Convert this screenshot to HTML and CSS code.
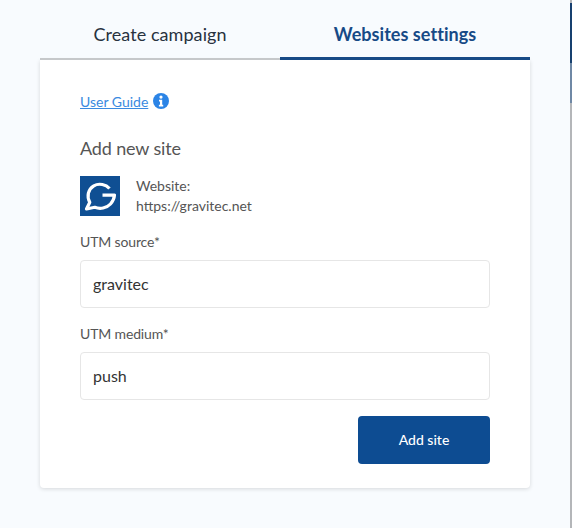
FILE: index.html
```html
<!DOCTYPE html>
<html lang="en">
<head>
<meta charset="utf-8">
<title>Websites settings</title>
<link rel="stylesheet" href="styles.css">
</head>
<body>
<div class="page">
  <div class="tabs">
    <div class="tab">Create campaign</div>
    <div class="tab tab-active">Websites settings</div>
  </div>
  <main class="card">
    <div class="guide">
      <a class="guide-link" href="#">User Guide</a>
      <svg class="info" viewBox="0 0 16 16" width="16" height="16" aria-hidden="true">
        <circle cx="8" cy="8" r="8" fill="#2b84e6"/>
        <circle cx="8" cy="4.1" r="1.6" fill="#fff"/>
        <path d="M6 6.8h3.2v5h1v1.6H5.9v-1.6h1.1V8.4H6z" fill="#fff"/>
      </svg>
    </div>
    <h2 class="title">Add new site</h2>
    <div class="site">
      <svg class="logo" viewBox="0 0 40 40" width="40" height="40" aria-hidden="true">
        <rect width="40" height="40" fill="#0f4f93"/>
        <path d="M29.5 12.5C26 8.5 19 6.8 13.8 9.8C8 13.2 6.5 20.5 9.8 26.2L6.5 33L14.8 31.3C20 33.3 26.5 32.3 30.5 28C33 25.3 34.2 22.5 34.5 19.2H22.5" fill="none" stroke="#fff" stroke-width="3.2" stroke-linejoin="round"/>
      </svg>
      <div class="site-text">
        <div>Website:</div>
        <div>https://gravitec.net</div>
      </div>
    </div>
    <label class="label" for="src">UTM source*</label>
    <input class="input" id="src" value="gravitec">
    <label class="label label-next" for="med">UTM medium*</label>
    <input class="input" id="med" value="push">
    <div class="actions">
      <button class="btn" type="button">Add site</button>
    </div>
  </main>
</div>
<div class="edge"><div class="edge-thumb"></div></div>
</body>
</html>
```
FILE: styles.css
```css
* { box-sizing: border-box; }
html, body { margin: 0; height: 100%; }
body {
  background: #f8fbfe;
  font-family: Lato, "Liberation Sans", sans-serif;
  color: #555;
  overflow: hidden;
}
.page { width: 490px; margin-left: 40px; }
.tabs { display: flex; height: 60px; }
.tab {
  flex: 0 0 240px;
  display: flex;
  align-items: center;
  justify-content: center;
  height: 60px;
  padding-top: 9px;
  font-size: 18px;
  letter-spacing: 0.07px;
  color: #28323f;
  border-bottom: 2px solid #c6c8ca;
}
.tab-active {
  flex: 0 0 250px;
  padding-top: 10px;
  color: #174a86;
  font-weight: 700;
  letter-spacing: 0.05px;
  border-bottom: 3px solid #174a86;
}
.card {
  background: #fff;
  height: 428px;
  padding: 31px 40px 0;
  border-radius: 0 0 4px 4px;
  box-shadow: 0 1px 4px rgba(0, 0, 0, 0.14);
}
.guide { display: flex; align-items: center; gap: 5px; height: 20px; }
.guide-link { color: #3a8ae0; font-size: 14px; }
.title { margin: 26px 0 0; font-size: 18px; line-height: 22px; font-weight: 400; letter-spacing: -0.15px; color: #555; }
.site { display: flex; align-items: center; gap: 16px; margin-top: 17px; }
.logo { display: block; }
.site-text { font-size: 14px; line-height: 20px; color: #555; }
.label { display: block; margin-top: 16px; font-size: 14px; line-height: 20px; letter-spacing: -0.15px; color: #555; }
.label-next { margin-top: 16px; }
.input {
  display: block;
  width: 100%;
  height: 48px;
  margin-top: 8px;
  padding: 0 12px 2px;
  border: 1px solid #e6e6e6;
  border-radius: 4px;
  background: #fff;
  font: 16px Lato, "Liberation Sans", sans-serif;
  color: #333;
}
.actions { display: flex; justify-content: flex-end; margin-top: 16px; }
.btn {
  width: 132px;
  height: 48px;
  padding: 0 0 2px;
  border: 0;
  border-radius: 4px;
  background: #0d4c92;
  color: #fff;
  font: 500 14px Lato, "Liberation Sans", sans-serif;
}
.edge {
  position: absolute;
  top: 0;
  right: 0;
  width: 2px;
  height: 100%;
  background: #b4b6b9;
}
.edge-thumb {
  height: 100px;
  margin-top: 3px;
  background: linear-gradient(#17406f 0, #17406f 60%, #6f88a5 60%, #6f88a5 100%);
}
```
